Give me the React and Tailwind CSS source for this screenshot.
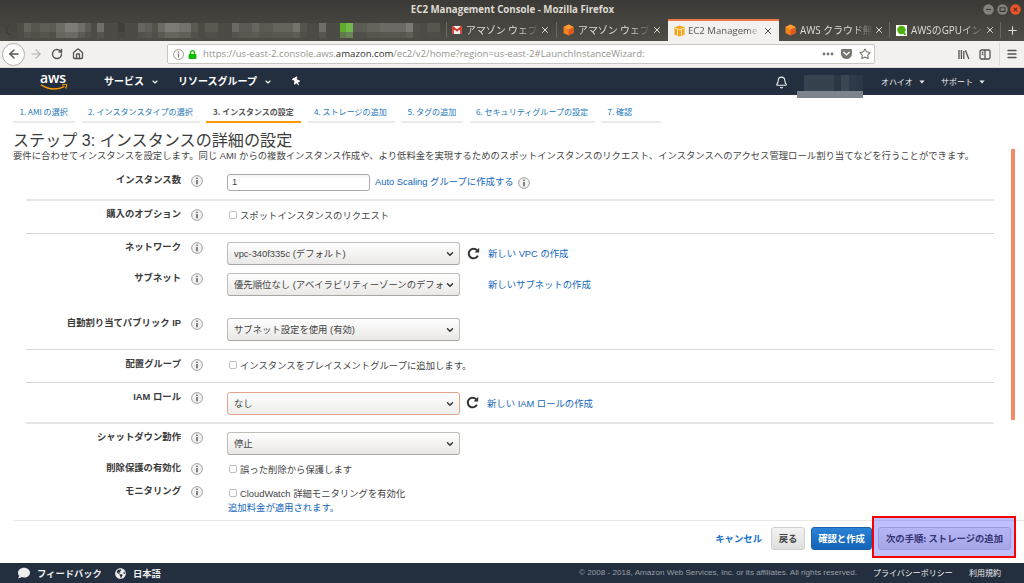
import React from 'react';
import { ArrowLeft, ArrowRight, RotateCw, Home, X, Plus, Star, Menu, ChevronDown, Bell } from 'lucide-react';
import { FaGlobeAmericas, FaComment, FaThumbtack, FaLock } from 'react-icons/fa';

const mosaic = [
  ['w-[7px]', 'bg-[#454440]', 'bg-[#494843]'],
  ['w-[7px]', 'bg-[#4c4b45]', 'bg-[#4c4b45]'],
  ['w-[7px]', 'bg-[#63625b]', 'bg-[#56554e]'],
  ['w-[9px]', 'bg-[#56554e]', 'bg-[#515049]'],
  ['w-[9px]', 'bg-[#5e5d56]', 'bg-[#55544d]'],
  ['w-[7px]', 'bg-[#5b5a53]', 'bg-[#504f48]'],
  ['w-[9px]', 'bg-[#6f6c66]', 'bg-[#66655e]'],
  ['w-[13px]', 'bg-[#7e7c77]', 'bg-[#6b6a64]'],
  ['w-[7px]', 'bg-[#706e68]', 'bg-[#5a5952]'],
  ['w-[6px]', 'bg-[#5c5b54]', 'bg-[#51504a]'],
  ['w-[6px]', 'bg-[#4c4b45]', 'bg-[#4c4b45]'],
  ['w-[7px]', 'bg-[#706e68]', 'bg-[#55544d]'],
  ['w-[14px]', 'bg-[#4c4b45]', 'bg-[#4c4b45]'],
  ['w-[7px]', 'bg-[#403f3b]', 'bg-[#484741]'],
  ['w-[13px]', 'bg-[#4c4b45]', 'bg-[#4c4b45]'],
  ['w-[7px]', 'bg-[#68675f]', 'bg-[#53524c]'],
  ['w-[7px]', 'bg-[#5f605b]', 'bg-[#57564f]'],
  ['w-[6px]', 'bg-[#54534c]', 'bg-[#504f49]'],
  ['w-[7px]', 'bg-[#6c6a64]', 'bg-[#5a5952]'],
  ['w-[14px]', 'bg-[#7c7a75]', 'bg-[#65645d]'],
  ['w-[12px]', 'bg-[#74726d]', 'bg-[#605f58]'],
  ['w-[7px]', 'bg-[#5a5952]', 'bg-[#52514a]'],
  ['w-[7px]', 'bg-[#4c4b45]', 'bg-[#4c4b45]'],
  ['w-[13px]', 'bg-[#595851]', 'bg-[#504f49]'],
  ['w-[14px]', 'bg-[#4c4b45]', 'bg-[#4c4b45]'],
  ['w-[7px]', 'bg-[#6a6962]', 'bg-[#55544d]'],
  ['w-[13px]', 'bg-[#5b5a54]', 'bg-[#585750]'],
  ['w-[7px]', 'bg-[#686660]', 'bg-[#5b5a53]'],
  ['w-[14px]', 'bg-[#5a5952]', 'bg-[#55544d]'],
  ['w-[20px]', 'bg-[#64635c]', 'bg-[#57564f]'],
  ['w-[7px]', 'bg-[#74726c]', 'bg-[#5d5c55]'],
  ['w-[7px]', 'bg-[#55544d]', 'bg-[#504f49]'],
  ['w-[12px]', 'bg-[#4c4b45]', 'bg-[#4c4b45]'],
  ['w-[7px]', 'bg-[#6f6e67]', 'bg-[#56554e]'],
  ['w-[14px]', 'bg-[#4c4b45]', 'bg-[#4c4b45]'],
  ['w-[6px]', 'bg-[#5eac2a]', 'bg-[#5e7b49]'],
  ['w-[7px]', 'bg-[#75b84c]', 'bg-[#6a8457]'],
  ['w-[14px]', 'bg-[#5c5b55]', 'bg-[#4f4e48]'],
  ['w-[13px]', 'bg-[#64635c]', 'bg-[#56554e]'],
  ['w-[26px]', 'bg-[#6b6a64]', 'bg-[#57564f]'],
  ['w-[7px]', 'bg-[#7b7974]', 'bg-[#5e5d56]'],
  ['w-[7px]', 'bg-[#504f49]', 'bg-[#4e4d47]'],
  ['w-[7px]', 'bg-[#4c4b45]', 'bg-[#4c4b45]'],
  ['w-[13px]', 'bg-[#57564f]', 'bg-[#4e4d47]'],
];

function Cube() {
  return (
    <svg width="11" height="12" viewBox="0 0 11 12" className="shrink-0">
      <path d="M5.5 0.5 10.5 3v6L5.5 11.5.5 9V3z" fill="#f58220" />
      <path d="M5.5 5.5 10.5 3v6L5.5 11.5z" fill="#df5a1c" />
      <path d="M.5 3 5.5.5 10.5 3 5.5 5.5z" fill="#fb9d32" />
    </svg>
  );
}

function Ec2Icon() {
  return (
    <svg width="11" height="12" viewBox="0 0 11 12" className="shrink-0">
      <path d="M.5 2.2 5.5.5l5 1.7v7.6l-5 1.7-5-1.7z" fill="#f5a81c" />
      <path d="M1 3.2 5.5 4.6 10 3.2M3.6 4.4v6M7.4 4.4v6" stroke="#fff3dc" strokeWidth=".8" fill="none" />
    </svg>
  );
}

function Gmail() {
  return (
    <svg width="10" height="8" viewBox="0 0 10 8" className="shrink-0">
      <rect width="10" height="8" rx=".8" fill="#f3f1f0" />
      <path d="M1 8V1l4 3.6L9 1v7" stroke="#d93a2f" strokeWidth="1.8" fill="none" />
    </svg>
  );
}

function Qiita() {
  return (
    <svg width="11" height="11" viewBox="0 0 11 11" className="shrink-0">
      <rect width="11" height="11" fill="#fff" />
      <circle cx="5.4" cy="5" r="4.2" fill="#4cb010" />
      <path d="M7 7.5h2L10.5 10H8z" fill="#4cb010" />
    </svg>
  );
}

function Tab({ icon, title, active, sep }) {
  return (
    <div
      className={
        active
          ? 'flex h-[22px] w-[111px] items-center border-t-2 border-[#f07746] bg-[#f2f1f0] pl-[6px] text-[#55544f]'
          : 'flex h-[22px] w-[111px] items-center pl-[6px] text-[#dedcd6]'
      }
    >
      {icon}
      <span
        className={
          active
            ? 'ml-[3px] w-[74px] whitespace-nowrap font-["Open_Sans"] text-[9.6px] leading-4 [mask-image:linear-gradient(to_right,black_80%,transparent_98%)]'
            : 'ml-[4px] w-[73px] whitespace-nowrap font-["Open_Sans","Noto_Sans_CJK_JP",sans-serif] text-[9.9px] leading-4 [mask-image:linear-gradient(to_right,black_72%,transparent_100%)]'
        }
      >
        {title}
      </span>
      <X size={10} strokeWidth={2.4} className="ml-px shrink-0" />
      {sep && <div className="ml-auto h-[16px] w-px bg-[#6b6963]" />}
    </div>
  );
}

function Browser() {
  return (
    <div>
      <div className="bg-linear-to-b from-[#3b3a36] to-[#4d4c46]">
        <div className="flex h-[19px] items-center pr-[3px]">
          <div className="flex-1 pl-[42px] text-center font-['Open_Sans'] text-[9.7px] font-bold leading-[18px] text-[#dfdbd2]">
            EC2 Management Console - Mozilla Firefox
          </div>
          <div className="flex gap-[2.5px]">
            <WindowButton d="M3 5.5h5" />
            <WindowButton d="M3 3.8h5v3.6H3z" />
            <WindowButton close d="m3.6 3.6 3.8 3.8M7.4 3.6 3.6 7.4" />
          </div>
        </div>
        <div className="flex h-[22px] items-center">
          <div className="flex w-[446px] items-center pl-[6px]">
            <div className="-mr-[6px] h-[10px] w-[10px] shrink-0 rounded-full border border-[#3a3935]" />
            {mosaic.map(([w, top, bottom], i) => (
              <div key={i} className={`shrink-0 ${w}`}>
                <div className={`h-[9px] ${top}`} />
                <div className={`h-[6px] ${bottom}`} />
              </div>
            ))}
          </div>
          <div className="flex">
            <div className="-mr-px mt-[3px] h-[16px] w-px bg-[#6b6963]" />
            <Tab icon={<Gmail />} title="アマゾン ウェブ" sep />
            <Tab icon={<Cube />} title="アマゾン ウェブ" />
            <Tab icon={<Ec2Icon />} title="EC2 Manageme" active />
            <Tab icon={<Cube />} title="AWS クラウド無" sep />
            <Tab icon={<Qiita />} title="AWSのGPUイン" sep />
          </div>
          <Plus size={13} strokeWidth={2} className="ml-[5px] shrink-0 text-[#dedcd6]" />
        </div>
      </div>
      <div className="flex h-[27px] items-center border-b border-[#dcdad8] bg-[#f2f1f0] text-[#55544f]">
        <div className="ml-[2px] flex h-[23px] w-[23px] items-center justify-center rounded-full border border-[#b0aeaa] bg-white">
          <ArrowLeft size={14} strokeWidth={2.4} />
        </div>
        <ArrowRight size={14} className="ml-[4px] text-[#b4b2ae]" />
        <RotateCw size={12} strokeWidth={2.8} className="ml-[8px]" />
        <Home size={12} strokeWidth={2.6} className="ml-[9px]" />
        <div className="ml-[83px] flex h-[20px] w-[708px] items-center rounded-[2px] border border-[#c9c6c2] bg-white pl-[5px] pr-[4px]">
          <InfoMark small />
          <FaLock size={9} className="ml-[4px] text-[#12bc00]" />
          <span className="ml-[6px] flex-1 whitespace-nowrap font-['Open_Sans'] text-[9.6px] leading-4 text-[#96948f]">
            https://us-east-2.console.aws.<span className="text-[#33322e]">amazon.com</span>/ec2/v2/home?region=us-east-2#LaunchInstanceWizard:
          </span>
          <svg width="12" height="4" viewBox="0 0 12 4" fill="#77756f">
            <circle cx="2" cy="2" r="1.4" />
            <circle cx="6" cy="2" r="1.4" />
            <circle cx="10" cy="2" r="1.4" />
          </svg>
          <svg width="11" height="10" viewBox="0 0 11 10" className="ml-[7px]">
            <path d="M1.2 0h8.6Q11 0 11 1.2V4.5a5.5 5.5 0 0 1-11 0V1.2Q0 0 1.2 0z" fill="#77756f" />
            <path d="m2.8 3.3 2.7 2.6 2.7-2.6" stroke="#fff" strokeWidth="1.4" fill="none" strokeLinecap="round" />
          </svg>
          <Star size={12} strokeWidth={2.2} className="ml-[7px] mr-[-1px] text-[#77756f]" />
        </div>
        <svg width="12" height="11" viewBox="0 0 12 11" className="ml-[83px]" stroke="#55544f" strokeWidth="1.3">
          <path d="M1 1v9M3.4 1v9M5.8 2v8M7.4 1.2 10.8 10" />
        </svg>
        <svg width="12" height="11" viewBox="0 0 12 11" className="ml-[9px]" fill="none" stroke="#55544f" strokeWidth="1.3">
          <rect x="1" y="1" width="10" height="9" rx="1.5" />
          <path d="M6 1v9M2.8 3.5h1.6M2.8 5.5h1.6" />
        </svg>
        <div className="ml-[8px] h-[22px] w-px bg-[#dddbd8]" />
        <Menu size={12} strokeWidth={2.6} className="ml-[6px]" />
      </div>
    </div>
  );
}

function WindowButton({ d, close }) {
  return (
    <svg width="11" height="11" viewBox="0 0 11 11">
      <circle cx="5.5" cy="5.5" r="5.2" fill={close ? '#e9562a' : '#84827b'} />
      <path d={d} stroke={close ? '#5b2a18' : '#3c3b37'} strokeWidth="1.1" fill="none" />
    </svg>
  );
}

function InfoMark({ small }) {
  const size = small ? 11 : 12;
  return (
    <svg width={size} height={size} viewBox="0 0 12 12" className="shrink-0">
      <circle cx="6" cy="6" r="5.4" fill={small ? '#fff' : '#f1f1f1'} stroke={small ? '#85837e' : '#999'} strokeWidth=".9" />
      <path d="M6 4.9v4.4" stroke={small ? '#77756f' : '#444'} strokeWidth="1.3" />
      <circle cx="6" cy="3.2" r=".8" fill={small ? '#77756f' : '#444'} />
    </svg>
  );
}

function Caret() {
  return (
    <svg width="6" height="4" viewBox="0 0 6 4">
      <path d="M.4.4h5.2L3 3.4z" fill="#eee" />
    </svg>
  );
}

function AwsHeader() {
  return (
    <div className="flex h-[27px] bg-[#232f3e] text-white">
      <div className="ml-[40px] w-[28px] pt-[4px]">
        <div className="h-[12px] font-['Open_Sans'] text-[14px] font-semibold leading-[11px] tracking-[-0.2px]">aws</div>
        <svg width="28" height="7" viewBox="0 0 28 7" fill="none" stroke="#f90" strokeWidth="1.5">
          <path d="M1 .9Q13 8.4 24.5 2.3" />
          <path d="M22 .9q4-1 4.6-.3.5.8-1 4" strokeWidth="1.2" />
        </svg>
      </div>
      <div className="ml-[36px] flex h-[24px] items-center text-[10px] font-bold">
        <span className="w-[47px]">サービス</span>
        <ChevronDown size={8} strokeWidth={3.5} className="mt-[3px]" />
        <span className="ml-[19px] w-[86px]">リソースグループ</span>
        <ChevronDown size={8} strokeWidth={3.5} className="mt-[3px]" />
        <FaThumbtack size={9} className="ml-[20px] mt-[3px] -rotate-[30deg]" />
      </div>
      <div className="ml-auto flex h-[28px] items-center text-[8px] text-[#eee]">
        <Bell size={13} strokeWidth={2} />
        <div className="ml-[9px] w-[66px] self-start pt-[7px]">
          <div className="ml-[7px] flex h-[16px]">
            <div className="w-[30px] bg-[#37424f]" />
            <div className="w-[7px] bg-[#2c3745]" />
            <div className="w-[8px] bg-[#3b4653]" />
            <div className="w-[7px] bg-[#303b49]" />
            <div className="w-[7px] bg-[#2c3745]" />
          </div>
          <div className="h-[7px] bg-[#7c848d]" />
        </div>
        <span className="ml-[18px] w-[38px]">オハイオ</span>
        <Caret />
        <span className="ml-[16px] w-[38px]">サポート</span>
        <Caret />
        <div className="w-[39px]" />
      </div>
    </div>
  );
}

const steps = [
  { text: '1. AMI の選択', width: 'w-[62px]' },
  { text: '2. インスタンスタイプの選択', width: 'w-[118px]' },
  { text: '3. インスタンスの設定', width: 'w-[95px]', active: true },
  { text: '4. ストレージの追加', width: 'w-[87px]' },
  { text: '5. タグの追加', width: 'w-[62px]' },
  { text: '6. セキュリティグループの設定', width: 'w-[125px]' },
  { text: '7. 確認', width: 'w-[60px]' },
];

function Row({ label, height, children }) {
  return (
    <div className={`flex items-start ${height}`}>
      <div className="w-[181px] text-right text-[9.36px] font-bold leading-[25px] text-[#3a3a3a]">{label}</div>
      <div className="ml-[10px] mt-[7px]">
        <InfoMark />
      </div>
      <div className="ml-[24px] flex-1 text-[9.36px]">{children}</div>
    </div>
  );
}

function Select({ value, focus }) {
  return (
    <div
      className={
        focus
          ? 'mt-[7px] flex h-[23px] w-[233px] items-center rounded-[3px] border border-[#e2a48c] bg-linear-to-b from-white to-[#ededeb] pl-[6px] pr-[4px]'
          : 'mt-[7px] flex h-[23px] w-[233px] items-center rounded-[3px] border border-[#bfbdba] border-b-[#a8a6a3] bg-linear-to-b from-white to-[#e9e8e6] pl-[6px] pr-[4px]'
      }
    >
      <span className="flex-1 whitespace-nowrap pt-px leading-[18px] text-[#444]">{value}</span>
      <ChevronDown size={10} strokeWidth={3.4} className="shrink-0 text-[#333]" />
    </div>
  );
}

function Check({ text }) {
  return (
    <div className="flex items-start pl-[2px] text-[#444]">
      <div className="mt-[9px] h-[8px] w-[8px] rounded-[2px] border border-[#c2c0bd] bg-white" />
      <span className="ml-[3px] mt-[4px] leading-[20px]">{text}</span>
    </div>
  );
}

function Divider({ thick }) {
  return <div className={thick ? 'ml-[26px] mr-[30px] h-[2px] bg-[#e6e6e6]' : 'ml-[26px] mr-[30px] h-px bg-[#d8d8d8]'} />;
}

function Reload() {
  return (
    <svg width="13" height="13" viewBox="0 0 13 13" fill="none" stroke="#333" strokeWidth="2">
      <path d="M10.2 3.4A4.8 4.8 0 1 0 10.9 8.6" />
      <path d="M12.2.8v4.6H7.5z" fill="#333" stroke="none" />
    </svg>
  );
}

function Wizard() {
  return (
    <div className="h-[468px] bg-white">
      <div className="flex h-[28px] gap-[6.5px] pl-[13px]">
        {steps.map((s) => (
          <div
            key={s.text}
            className={
              s.active
                ? `${s.width} whitespace-nowrap border-b-2 border-[#f90] pl-[7px] pt-[9px] text-[8px] font-bold leading-4 text-[#555]`
                : `${s.width} whitespace-nowrap border-b-2 border-[#eaeaea] pl-[6.5px] pt-[9px] text-[8.05px] leading-4 text-[#2277bb]`
            }
          >
            {s.text}
          </div>
        ))}
      </div>
      <h1 className="h-[26px] pl-[13px] pt-[5px] font-['Liberation_Sans','Noto_Sans_CJK_JP',sans-serif] text-[16.1px] leading-[24px] text-[#3c3c3c]">
        ステップ 3: インスタンスの詳細の設定
      </h1>
      <div className="flex h-[371px] items-start font-['Liberation_Sans','Noto_Sans_CJK_JP',sans-serif]">
        <div className="w-[1024px]">
          <p className="h-[19px] whitespace-nowrap pl-[13px] text-[9.36px] leading-[14px] text-[#444]">
            要件に合わせてインスタンスを設定します。同じ AMI からの複数インスタンス作成や、より低料金を実現するためのスポットインスタンスのリクエスト、インスタンスへのアクセス管理ロール割り当てなどを行うことができます。
          </p>
          <Row label="インスタンス数" height="h-[31px]">
            <div className="flex items-start pt-[6px]">
              <div className="h-[17px] w-[143px] rounded-[3px] border border-[#aaa] bg-linear-to-b from-[#f4f4f4] to-white to-30% pl-[4px] leading-[15px] text-[#444]">1</div>
              <span className="ml-[5px] leading-[16px] text-[#1166bb]">Auto Scaling グループに作成する</span>
              <div className="ml-[4px] mt-[3px]">
                <InfoMark />
              </div>
            </div>
          </Row>
          <Divider thick />
          <div className="h-px" />
          <Row label="購入のオプション" height="h-[31px]">
            <Check text="スポットインスタンスのリクエスト" />
          </Row>
          <Divider />
          <div className="h-px" />
          <Row label="ネットワーク" height="h-[31px]">
            <div className="flex">
              <Select value="vpc-340f335c (デフォルト)" />
              <div className="ml-[7px] mt-[12px]"><Reload /></div>
              <span className="ml-[8px] mt-[11px] leading-4 text-[#1166bb]">新しい VPC の作成</span>
            </div>
          </Row>
          <Row label="サブネット" height="h-[45px]">
            <div className="flex">
              <Select value="優先順位なし (アベイラビリティーゾーンのデフォ" />
              <span className="ml-[28px] mt-[11px] leading-4 text-[#1166bb]">新しいサブネットの作成</span>
            </div>
          </Row>
          <Row label="自動割り当てパブリック IP" height="h-[38px]">
            <Select value="サブネット設定を使用 (有効)" />
          </Row>
          <Divider />
          <div className="h-[2px]" />
          <Row label="配置グループ" height="h-[30px]">
            <Check text="インスタンスをプレイスメントグループに追加します。" />
          </Row>
          <Divider />
          <div className="h-[2px]" />
          <Row label="IAM ロール" height="h-[37px]">
            <div className="flex">
              <Select value="なし" focus />
              <div className="ml-[6px] mt-[11px]"><Reload /></div>
              <span className="ml-[8px] mt-[11px] leading-4 text-[#1166bb]">新しい IAM ロールの作成</span>
            </div>
          </Row>
          <Divider thick />
          <div className="h-px" />
          <Row label="シャットダウン動作" height="h-[31px]">
            <Select value="停止" />
          </Row>
          <Row label="削除保護の有効化" height="h-[23px]">
            <Check text="誤った削除から保護します" />
          </Row>
          <Row label="モニタリング" height="h-[41px]">
            <div className="pt-px">
              <Check text="CloudWatch 詳細モニタリングを有効化" />
            </div>
            <div className="-mt-[3px] pl-px leading-[14px] text-[#1166bb]">追加料金が適用されます。</div>
          </Row>
        </div>
        <div className="-ml-[13px] h-[271px] w-[4px] shrink-0 bg-[#f08c66]" />
      </div>
      <div className="relative ml-[13px] flex h-[43px] items-center justify-end border-t border-[#e8e8e8] pb-[7px] pr-[13px] text-[9.36px] font-bold">
        <span className="text-[#1a73c7]">キャンセル</span>
        <div className="ml-[9px] flex h-[23px] w-[34px] items-center justify-center rounded-[3px] border border-[#cfcfcf] bg-linear-to-b from-[#f3f3f3] to-[#dedede] pb-px text-[#444]">戻る</div>
        <div className="ml-[6px] flex h-[23px] w-[61px] items-center justify-center rounded-[3px] border border-[#1a62ae] bg-linear-to-b from-[#2a83d6] to-[#1463b6] pb-px text-white">確認と作成</div>
        <div className="ml-[6px] flex h-[23px] w-[133px] items-center justify-center rounded-[3px] border border-[#cfcfcf] bg-linear-to-b from-[#f3f3f3] to-[#dedede] pb-px text-[#444]">次の手順: ストレージの追加</div>
        <div className="absolute -top-[5px] right-[8px] h-[42px] w-[144px] border-2 border-[#f80000] bg-[#0000ff]/25" />
      </div>
    </div>
  );
}

function Footer() {
  return (
    <div className="flex h-[20px] items-center bg-[#232f3e] text-[#eee]">
      <FaComment size={12} className="ml-[18px]" />
      <span className="ml-[7px] w-[65px] whitespace-nowrap text-[9.3px] font-bold leading-4">フィードバック</span>
      <FaGlobeAmericas size={11} className="ml-[13px]" />
      <span className="ml-[7px] text-[9.3px] font-bold leading-4">日本語</span>
      <span className="ml-auto whitespace-nowrap font-['Liberation_Sans'] text-[8.12px] text-[#999fa6]">
        © 2008 - 2018, Amazon Web Services, Inc. or its affiliates. All rights reserved.
      </span>
      <span className="ml-[16px] w-[80px] whitespace-nowrap text-[8px]">プライバシーポリシー</span>
      <span className="ml-[16px] w-[55px] text-[8px]">利用規約</span>
    </div>
  );
}

export default function App() {
  return (
    <div className="h-[583px] w-[1024px] overflow-hidden bg-white font-['Noto_Sans_CJK_JP',sans-serif]">
      <Browser />
      <AwsHeader />
      <Wizard />
      <Footer />
    </div>
  );
}
